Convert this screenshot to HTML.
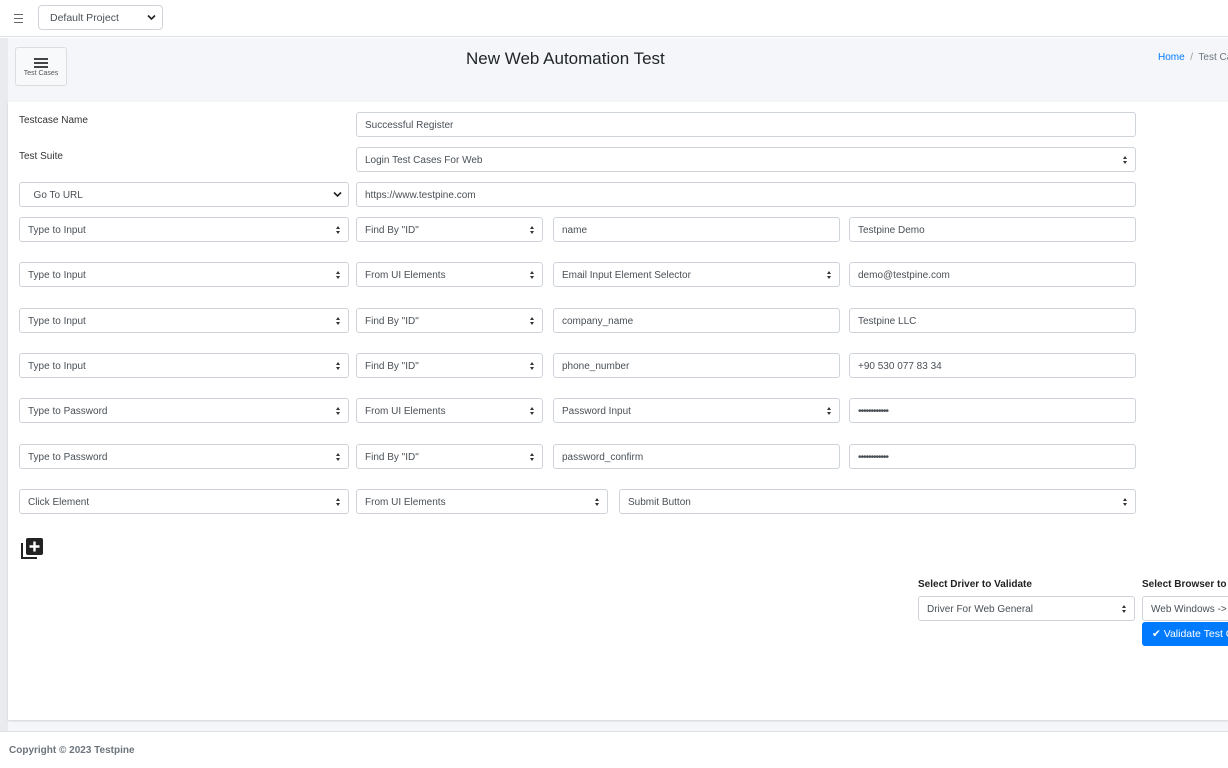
<!DOCTYPE html>
<html><head><meta charset="utf-8"><style>
*{box-sizing:border-box;margin:0;padding:0}
body{width:1228px;height:768px;overflow:hidden;background:#fff;font-family:"Liberation Sans",sans-serif;position:relative;color:#212529}
.a{position:absolute}
.f{position:absolute;height:25px;border:1px solid #ced4da;border-radius:3px;background:#fff;font-size:10px;color:#495057;padding-left:8px;line-height:25px;white-space:nowrap;overflow:hidden}
.s::after{content:"";position:absolute;right:8px;top:8px;width:0;height:0;border-left:2.5px solid transparent;border-right:2.5px solid transparent;border-bottom:3px solid #333}
.s::before{content:"";position:absolute;right:8px;top:13px;width:0;height:0;border-left:2.5px solid transparent;border-right:2.5px solid transparent;border-top:3px solid #333}
.lb{font-size:10px;color:#333}
.chev{position:absolute;right:6px;top:8px}
</style></head><body>
<div class="a" style="left:0;top:0;width:1228px;height:37px;background:#fff;border-bottom:1px solid #dee2e6"></div>
<div class="a" style="left:14px;top:14px;width:9px;height:1px;background:#666;box-shadow:0 4px 0 #666,0 8px 0 #666"></div>
<div class="f" style="left:38px;top:5px;width:125px;height:25px;font-size:10.5px;padding-left:11px;border-radius:4px">Default Project<svg class="chev" width="9" height="7" viewBox="0 0 9 7"><path d="M1 1.5l3.5 3.5 3.5-3.5" fill="none" stroke="#222" stroke-width="1.6"/></svg></div>
<div class="a" style="left:0;top:38px;width:1228px;height:693px;background:#f4f6f9"></div>
<div class="a" style="left:0;top:38px;width:8px;height:693px;background:#e9ebee"></div>
<div class="a" style="left:15px;top:47px;width:52px;height:39px;border:1px solid #ddd;border-radius:3px;background:#f8f9fa;text-align:center">
<div style="margin:10px auto 0;width:14px;height:2px;background:#444;box-shadow:0 4px 0 #444,0 8px 0 #444"></div>
<div style="font-size:7px;color:#555;margin-top:10px">Test Cases</div></div>
<div class="a" style="left:466px;top:49px;font-size:17px;color:#212529">New Web Automation Test</div>
<div class="a" style="left:1158px;top:52px;font-size:10px;white-space:nowrap"><span style="color:#007bff">Home</span> <span style="color:#999">&nbsp;/&nbsp;</span> <span style="color:#6c757d">Test Cases</span></div>
<div class="a" style="left:8px;top:102px;width:1220px;height:618px;background:#fff;box-shadow:0 1px 2px rgba(0,0,0,.15)"></div>
<div class="a lb" style="left:19px;top:115px">Testcase Name</div>
<div class="a lb" style="left:19px;top:151px">Test Suite</div>
<div class="f" style="left:356px;top:112px;width:780px">Successful Register</div>
<div class="f s" style="left:356px;top:147px;width:780px">Login Test Cases For Web</div>
<div class="f" style="left:19px;top:182px;width:330px">&nbsp;&nbsp;Go To URL<svg class="chev" width="9" height="7" viewBox="0 0 9 7"><path d="M1 1.5l3.5 3.5 3.5-3.5" fill="none" stroke="#222" stroke-width="1.6"/></svg></div>
<div class="f" style="left:356px;top:182px;width:780px">https://www.testpine.com</div>

<div class="f s" style="left:19px;top:217px;width:330px">Type to Input</div>
<div class="f s" style="left:356px;top:217px;width:187px">Find By "ID"</div>
<div class="f" style="left:553px;top:217px;width:287px">name</div>
<div class="f" style="left:849px;top:217px;width:287px">Testpine Demo</div>

<div class="f s" style="left:19px;top:262px;width:330px">Type to Input</div>
<div class="f s" style="left:356px;top:262px;width:187px">From UI Elements</div>
<div class="f s" style="left:553px;top:262px;width:287px">Email Input Element Selector</div>
<div class="f" style="left:849px;top:262px;width:287px">demo@testpine.com</div>

<div class="f s" style="left:19px;top:308px;width:330px">Type to Input</div>
<div class="f s" style="left:356px;top:308px;width:187px">Find By "ID"</div>
<div class="f" style="left:553px;top:308px;width:287px">company_name</div>
<div class="f" style="left:849px;top:308px;width:287px">Testpine LLC</div>

<div class="f s" style="left:19px;top:353px;width:330px">Type to Input</div>
<div class="f s" style="left:356px;top:353px;width:187px">Find By "ID"</div>
<div class="f" style="left:553px;top:353px;width:287px">phone_number</div>
<div class="f" style="left:849px;top:353px;width:287px">+90 530 077 83 34</div>

<div class="f s" style="left:19px;top:398px;width:330px">Type to Password</div>
<div class="f s" style="left:356px;top:398px;width:187px">From UI Elements</div>
<div class="f s" style="left:553px;top:398px;width:287px">Password Input</div>
<div class="f" style="left:849px;top:398px;width:287px;letter-spacing:-1px">••••••••••••</div>

<div class="f s" style="left:19px;top:444px;width:330px">Type to Password</div>
<div class="f s" style="left:356px;top:444px;width:187px">Find By "ID"</div>
<div class="f" style="left:553px;top:444px;width:287px">password_confirm</div>
<div class="f" style="left:849px;top:444px;width:287px;letter-spacing:-1px">••••••••••••</div>

<div class="f s" style="left:19px;top:489px;width:330px">Click Element</div>
<div class="f s" style="left:356px;top:489px;width:252px">From UI Elements</div>
<div class="f s" style="left:619px;top:489px;width:517px">Submit Button</div>

<svg class="a" style="left:21px;top:537px" width="23" height="23" viewBox="0 0 23 23"><path d="M1 6v15h15" fill="none" stroke="#222" stroke-width="2"/><rect x="5" y="1" width="17" height="17" rx="2" fill="#222"/><path d="M13.5 4.5v10M8.5 9.5h10" stroke="#fff" stroke-width="2.4"/></svg>

<div class="a" style="left:918px;top:579px;font-size:10px;font-weight:bold;color:#222">Select Driver to Validate</div>
<div class="a" style="left:1142px;top:579px;font-size:10px;font-weight:bold;color:#222;white-space:nowrap">Select Browser to Validate</div>
<div class="f s" style="left:918px;top:596px;width:217px">Driver For Web General</div>
<div class="f" style="left:1142px;top:596px;width:100px;border-radius:3px 0 0 3px">Web Windows -> (Win)</div>
<div class="a" style="left:1142px;top:622px;width:100px;height:24px;background:#007bff;border-radius:3px;color:#fff;font-size:10.5px;line-height:24px;padding-left:10px;white-space:nowrap">&#10004; Validate Test Case</div>

<div class="a" style="left:0;top:731px;width:1228px;height:1px;background:#dee2e6"></div>
<div class="a" style="left:9px;top:745px;font-size:10px;font-weight:bold;color:#6c757d">Copyright © 2023 Testpine</div>
</body></html>
